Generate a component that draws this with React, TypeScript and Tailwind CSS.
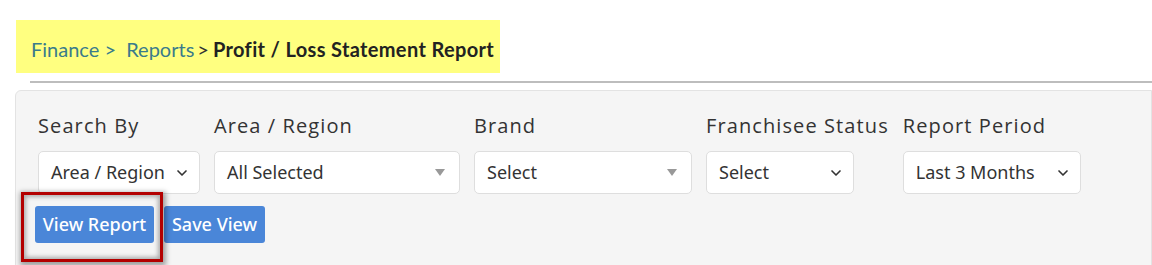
import React from "react";
import { ChevronDown } from "lucide-react";

const labelFont = { fontFamily: '"Open Sans", "Liberation Sans", sans-serif' };

interface FieldProps {
  label: string;
  value: string;
  width: string;
  kind: "native" | "multi";
}

const Field: React.FC<FieldProps> = ({ label, value, width, kind }) => (
  <div className="flex flex-col">
    <label className="text-[20px] leading-[24px] tracking-[1.1px] text-[#333] font-normal whitespace-nowrap mb-[13px]">
      {label}
    </label>
    <div
      className={`${width} h-[43px] bg-white border border-[#dedede] rounded-[5px] flex items-center justify-between pl-[12px] pr-[9px] font-['Noto_Sans',sans-serif] text-[18px] text-[#333]`}
    >
      <span className="whitespace-nowrap">{value}</span>
      {kind === "native" ? (
        <ChevronDown className="w-[16px] h-[16px] text-[#333]" strokeWidth={2.5} />
      ) : (
        <span className="w-0 h-0 border-l-[5px] border-r-[5px] border-t-[7px] border-l-transparent border-r-transparent border-t-[#999] mr-[5px]" />
      )}
    </div>
  </div>
);

export default function App() {
  return (
    <div className="w-[1152px] h-[265px] bg-white overflow-hidden relative">
      {/* Breadcrumb */}
      <div className="pt-[20px] pl-[16px]">
        <div className="inline-flex items-end w-[484px] h-[53px] bg-[#ffff80] pl-[15px] pb-[9px] font-['Lato',sans-serif] text-[20px]">
          <span className="text-[#3a7b8b]">Finance &gt;&nbsp;&nbsp;Reports</span>
          <span className="text-[#333] ml-[3px]">&gt;</span>
          <span className="font-bold text-[#222] ml-[4px] tracking-[0.35px]">Profit / Loss Statement Report</span>
        </div>
      </div>
      <div className="ml-[30px] mt-[8px] h-[2px] bg-[#bdbdbd]" />

      {/* Filter panel */}
      <div
        className="ml-[15px] mt-[7px] h-[200px] bg-[#f5f5f5] border border-[#e3e3e3] rounded-tl-[6px] pt-[23px] pl-[22px]"
        style={labelFont}
      >
        <div className="flex gap-[14px]">
          <Field label="Search By" value="Area / Region" width="w-[162px]" kind="native" />
          <Field label="Area / Region" value="All Selected" width="w-[246px]" kind="multi" />
          <Field label="Brand" value="Select" width="w-[218px]" kind="multi" />
          <Field label="Franchisee Status" value="Select" width="w-[148px]" kind="native" />
          <Field label="Report Period" value="Last 3 Months" width="w-[178px]" kind="native" />
        </div>
        <div className="flex gap-[10px] mt-[12px] -ml-[3px] font-['Noto_Sans',sans-serif] text-[18px] font-medium">
          <div className="relative">
            <button className="h-[37px] w-[119px] bg-[#4a86d8] text-white rounded-[3px]">View Report</button>
            <div className="absolute -left-[14px] -top-[14px] w-[142px] h-[70px] border-[3px] border-[#b30000] shadow-[1px_2px_5px_2px_rgba(0,0,0,0.35),inset_0_0_4px_2px_rgba(0,0,0,0.3)] pointer-events-none" />
          </div>
          <button className="h-[37px] w-[101px] bg-[#4a86d8] text-white rounded-[3px]">Save View</button>
        </div>
      </div>
    </div>
  );
}
